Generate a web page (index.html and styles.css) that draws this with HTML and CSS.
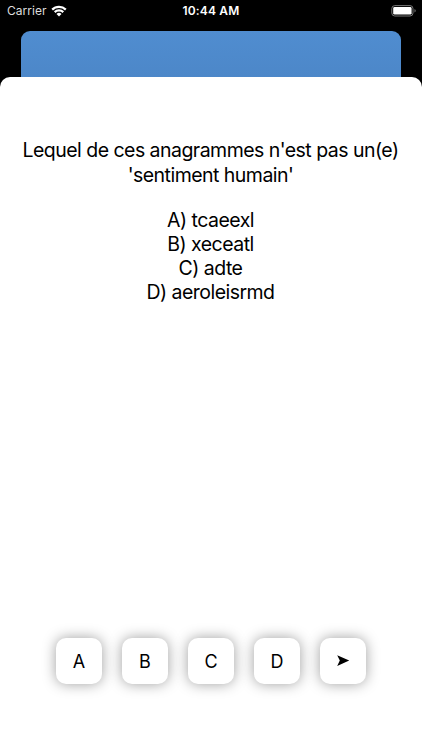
FILE: index.html
```html
<!DOCTYPE html>
<html lang="fr">
<head>
    <meta charset="UTF-8">
    <meta name="viewport" content="width=device-width, initial-scale=1.0">
    <title>Quiz</title>
    <link rel="stylesheet" href="styles.css">
</head>
<body>

<header class="status-bar">
    <div class="carrier">
        <span>Carrier</span>
        <svg class="wifi" viewBox="0 0 16 12" width="16" height="12">
            <path d="M1.2 4.6a9.7 9.7 0 0 1 13.6 0M3.7 7.1a6.1 6.1 0 0 1 8.6 0" fill="none" stroke="#fff" stroke-width="2.2"/>
            <path d="M5.5 9a3.6 3.6 0 0 1 5 0L8 11.5z" fill="#fff"/>
        </svg>
    </div>
    <span class="time">10:44 AM</span>
    <svg class="battery" viewBox="0 0 25 12" width="25" height="12">
        <rect x="0.8" y="0.6" width="21.2" height="10.4" rx="3" fill="none" stroke="#777"/>
        <rect x="2.2" y="2" width="18.4" height="7.6" rx="1.4" fill="#fff"/>
        <path d="M23.5 4v3.6q1.2-.6 1.2-1.8t-1.2-1.8z" fill="#777"/>
    </svg>
</header>

<div class="back-card"></div>

<main class="sheet">
    <div class="question">
        <p>Lequel de ces anagrammes n'est pas un(e)<br>'sentiment humain'</p>
        <p class="choices">A) tcaeexl<br>B) xeceatl<br>C) adte<br>D) aeroleisrmd</p>
    </div>

    <div class="buttons">
        <button type="button">A</button>
        <button type="button">B</button>
        <button type="button">C</button>
        <button type="button">D</button>
        <button type="button" aria-label="Suivant">
            <svg viewBox="0 0 14 12" width="14" height="12">
                <path d="M1.2 0.2L13.2 5.5 1.2 10.9 3.8 5.5z" fill="#000"/>
            </svg>
        </button>
    </div>
</main>

</body>
</html>
```
FILE: styles.css
```css
body {
    font-family: Inter, "Liberation Sans", sans-serif;
    margin: 0;
    height: 100vh;
    display: flex;
    flex-direction: column;
    background-color: #000;
    color: #000;
    overflow: hidden;
}

.status-bar {
    display: grid;
    grid-template-columns: 1fr auto 1fr;
    align-items: center;
    box-sizing: border-box;
    height: 22px;
    padding: 0 7px 1px 7px;
    color: #fff;
    font-size: 12px;
}

.carrier {
    display: flex;
    align-items: center;
    gap: 4px;
    color: #ddd;
    letter-spacing: 0.05px;
}

.time {
    font-weight: 600;
    letter-spacing: 0.15px;
}

.battery {
    justify-self: end;
    margin-right: -1px;
}

.back-card {
    height: 62px;
    margin: 9px 21px -16px;
    border-radius: 9px 9px 0 0;
    background: linear-gradient(#508dd0, #4b85c6);
}

.sheet {
    flex: 1;
    display: flex;
    flex-direction: column;
    justify-content: space-between;
    padding: 61.4px 0 66.5px;
    border-radius: 10px 10px 0 0;
    background-color: #fff;
}

.question {
    padding-right: 1px;
    text-align: center;
    font-size: 19.5px;
    letter-spacing: -0.53px;
    line-height: 24.2px;
}

.question p {
    margin: 0;
}

.question .choices {
    margin-top: 21px;
}

.buttons {
    display: flex;
    justify-content: center;
    gap: 20px;
}

button {
    display: flex;
    align-items: center;
    justify-content: center;
    width: 46px;
    height: 46px;
    padding: 1px 0 0;
    border: none;
    border-radius: 10px;
    background-color: #fff;
    color: #000;
    font-family: inherit;
    font-size: 18px;
    box-shadow: 0 0 14px rgba(0, 0, 0, 0.38);
}
```
